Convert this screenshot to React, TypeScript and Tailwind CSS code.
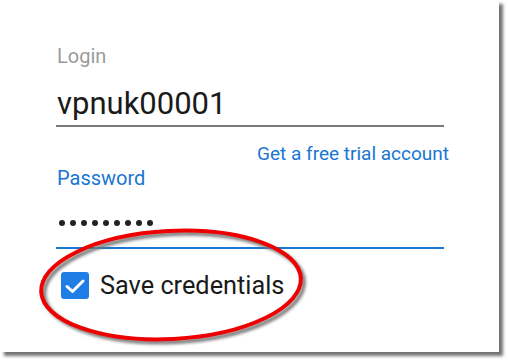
import React from "react";

export default function App() {
  return (
    <div className="w-[508px] h-[361px] bg-white relative overflow-hidden" style={{ fontFamily: "Roboto, 'Liberation Sans', sans-serif" }}>
      <div className="w-[499px] h-[352px] bg-white shadow-[4px_4px_3px_rgba(0,0,0,0.55)] flex flex-col pl-[56px] pt-[46px]">
        <div className="w-[388px] flex flex-col">
          <div className="text-[20px] leading-[20px] text-[#9a9a9a] pl-[1px]">Login</div>
          <div className="mt-[21px] text-[31px] leading-[34px] text-[#1a1a1a] pl-[1px]">vpnuk00001</div>
          <div className="mt-[4px] h-[2px] bg-[#7a7a7a]"></div>
          <div className="mt-[17px] self-end text-[19px] leading-[20px] text-[#1976d2] mr-[-5px]">Get a free trial account</div>
          <div className="mt-[4px] text-[20px] leading-[20px] text-[#1976d2] pl-[1px]">Password</div>
          <div className="mt-[32px] flex gap-[5px] pl-[3px]">
            {Array.from({ length: 9 }).map((_, i) => (
              <span key={i} className="block w-[6px] h-[6px] rounded-full bg-[#222]"></span>
            ))}
          </div>
          <div className="mt-[21px] h-[2px] bg-[#1976d2]"></div>
          <div className="mt-[23px] flex items-center gap-[11px] pl-[5px]">
            <div className="w-[28px] h-[27px] rounded-[3px] bg-[#1e7ee6] flex items-center justify-center">
              <svg width="22" height="18" viewBox="0 0 22 18">
                <path d="M3 9.5 L8.5 14.5 L19 4" fill="none" stroke="white" strokeWidth="3" strokeLinecap="round" strokeLinejoin="round" />
              </svg>
            </div>
            <div className="text-[25.3px] leading-[27px] text-[#1a1a1a]">Save credentials</div>
          </div>
        </div>
      </div>
      <svg className="absolute left-0 top-0 pointer-events-none" width="508" height="361" viewBox="0 0 508 361">
        <defs>
          <filter id="blur" x="-20%" y="-20%" width="140%" height="140%">
            <feGaussianBlur stdDeviation="1.5" />
          </filter>
        </defs>
        <ellipse cx="171" cy="285" rx="130" ry="54" fill="none" stroke="#777" strokeWidth="4" filter="url(#blur)" transform="translate(3 3) rotate(-3 171 285)" />
        <ellipse cx="171" cy="285" rx="130" ry="54" fill="none" stroke="#ee0000" strokeWidth="4" transform="rotate(-3 171 285)" />
      </svg>
    </div>
  );
}
